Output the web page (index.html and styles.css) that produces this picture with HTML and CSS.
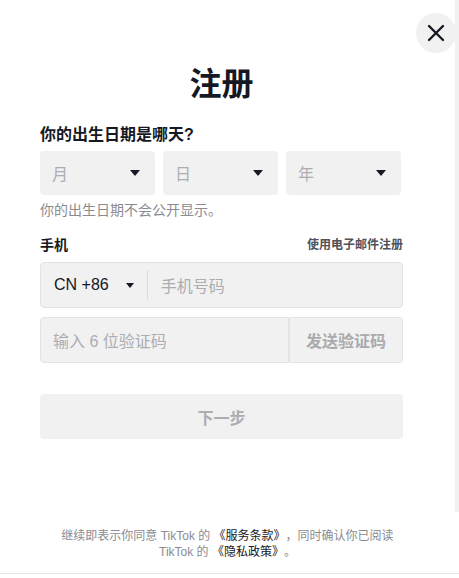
FILE: index.html
```html
<!DOCTYPE html>
<html lang="zh-CN">
<head>
<meta charset="utf-8">
<title>注册</title>
<link rel="stylesheet" href="styles.css">
</head>
<body>
<div class="frame">
  <div class="modal">
    <div class="content">
      <h1 class="title">注册</h1>
      <div class="label">你的出生日期是哪天?</div>
      <div class="dates">
        <div class="select"><span class="ph">月</span><span class="caret"></span></div>
        <div class="select"><span class="ph">日</span><span class="caret"></span></div>
        <div class="select"><span class="ph">年</span><span class="caret"></span></div>
      </div>
      <div class="hint">你的出生日期不会公开显示。</div>
      <div class="row-head">
        <span class="label-sm">手机</span>
        <a class="switch">使用电子邮件注册</a>
      </div>
      <div class="phone">
        <span class="cc">CN +86</span>
        <span class="caret small"></span>
        <span class="divider"></span>
        <span class="ph">手机号码</span>
      </div>
      <div class="code-row">
        <div class="code-input"><span class="ph">输入 6 位验证码</span></div>
        <div class="send">发送验证码</div>
      </div>
      <div class="next">下一步</div>
    </div>
    <div class="footer">继续即表示你同意 TikTok 的 <a class="link">《服务条款》</a>，同时确认你已阅读 TikTok 的 <a class="link">《隐私政策》</a>。</div>
  </div>
  <div class="scrollbar"></div>
  <button class="close" aria-label="关闭">
    <svg width="18" height="18" viewBox="0 0 18 18"><path d="M2 2 L16 16 M16 2 L2 16" stroke="#161823" stroke-width="2.4" stroke-linecap="round" fill="none"/></svg>
  </button>
</div>
</body>
</html>
```
FILE: styles.css
```css
* { box-sizing: border-box; }
html, body { margin: 0; padding: 0; background: #fff; }
body {
  font-family: "Liberation Sans", "Noto Sans CJK SC", sans-serif;
  color: #161823;
  text-spacing-trim: space-all;
}
.frame {
  position: relative;
  display: flex;
  align-items: flex-start;
  width: 459px;
  height: 574px;
  border-bottom: 1px solid #e3e3e4;
}
.modal {
  width: 455px;
  height: 573px;
  display: flex;
  flex-direction: column;
}
.scrollbar {
  width: 4px;
  height: 512px;
  background: #f1f1f2;
}
.close {
  position: absolute;
  top: 13px;
  right: 3px;
  width: 40px;
  height: 40px;
  border: 0;
  padding: 0;
  border-radius: 50%;
  background: #f1f1f2;
  display: flex;
  align-items: center;
  justify-content: center;
}
.content {
  padding: 64px 52px 0 40px;
}
.title {
  margin: 0;
  font-size: 32px;
  line-height: 40px;
  font-weight: 700;
  text-align: center;
}
.label {
  margin-top: 21px;
  font-size: 16px;
  line-height: 20px;
  font-weight: 700;
}
.dates {
  margin-top: 6px;
  display: flex;
  gap: 8px;
}
.select {
  width: 115px;
  height: 44px;
  background: #f1f1f2;
  border-radius: 4px;
  display: flex;
  align-items: center;
  justify-content: space-between;
  padding: 0 15px 0 12px;
}
.ph {
  font-size: 16px;
  color: #acadb1;
}
.caret {
  width: 0;
  height: 0;
  border-left: 5px solid transparent;
  border-right: 5px solid transparent;
  border-top: 6px solid #161823;
}
.caret.small {
  border-left-width: 4.5px;
  border-right-width: 4.5px;
  border-top-width: 5px;
  margin-left: 17px;
}
.hint {
  margin-top: 6px;
  font-size: 14px;
  line-height: 18px;
  color: #8a8b91;
}
.row-head {
  margin-top: 17px;
  display: flex;
  justify-content: space-between;
  align-items: center;
  line-height: 18px;
}
.label-sm {
  font-size: 14px;
  font-weight: 700;
}
.switch {
  font-size: 12px;
  font-weight: 700;
  color: #505159;
}
.phone {
  margin-top: 8px;
  height: 46px;
  background: #f1f1f2;
  border: 1px solid #e3e3e4;
  border-radius: 4px;
  display: flex;
  align-items: center;
  padding-left: 13px;
}
.cc {
  font-size: 16px;
  color: #161823;
}
.divider {
  width: 1px;
  height: 30px;
  background: #dcdcde;
  margin-left: 13px;
  margin-right: 13px;
}
.code-row {
  margin-top: 9px;
  display: flex;
  height: 46px;
}
.code-input {
  width: 249px;
  background: #f1f1f2;
  border: 1px solid #e3e3e4;
  border-radius: 4px 0 0 4px;
  display: flex;
  align-items: center;
  padding-left: 12px;
}
.send {
  flex: 1;
  background: #f1f1f2;
  border: 1px solid #e3e3e4;
  border-radius: 0 4px 4px 0;
  display: flex;
  align-items: center;
  justify-content: center;
  font-size: 16px;
  font-weight: 700;
  color: #a9aaad;
}
.next {
  margin-top: 31px;
  height: 45px;
  background: #f1f1f2;
  border-radius: 4px;
  display: flex;
  align-items: center;
  justify-content: center;
  font-size: 16px;
  font-weight: 700;
  color: #acadb1;
}
.footer {
  margin-top: auto;
  padding: 0 44px 13px;
  text-align: center;
  font-size: 12px;
  line-height: 16px;
  color: #8a8b91;
  text-spacing-trim: space-all;
}
.link {
  color: #161823;
}
```
